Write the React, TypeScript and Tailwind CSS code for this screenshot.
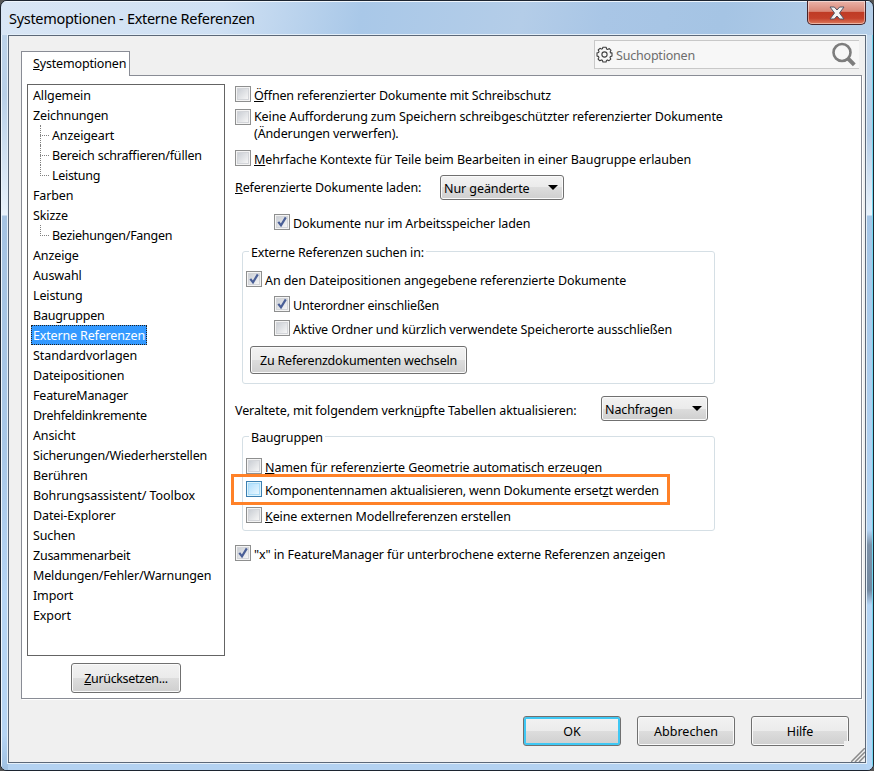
import { clsx } from "clsx";
import type { ReactNode } from "react";

type TreeItem = { label: string; child?: boolean; last?: boolean; tracking?: string };

const items: TreeItem[] = [
  { label: "Allgemein" },
  { label: "Zeichnungen" },
  { label: "Anzeigeart", child: true },
  { label: "Bereich schraffieren/füllen", child: true, tracking: "tracking-[-0.21px]" },
  { label: "Leistung", child: true, last: true, tracking: "tracking-[-0.3px]" },
  { label: "Farben" },
  { label: "Skizze" },
  { label: "Beziehungen/Fangen", child: true, last: true, tracking: "tracking-[-0.28px]" },
  { label: "Anzeige" },
  { label: "Auswahl" },
  { label: "Leistung" },
  { label: "Baugruppen", tracking: "tracking-[-0.2px]" },
  { label: "Externe Referenzen", tracking: "tracking-[-0.16px]" },
  { label: "Standardvorlagen", tracking: "tracking-[-0.06px]" },
  { label: "Dateipositionen" },
  { label: "FeatureManager", tracking: "tracking-[-0.2px]" },
  { label: "Drehfeldinkremente", tracking: "tracking-[-0.28px]" },
  { label: "Ansicht" },
  { label: "Sicherungen/Wiederherstellen", tracking: "tracking-[-0.18px]" },
  { label: "Berühren" },
  { label: "Bohrungsassistent/ Toolbox", tracking: "tracking-[-0.06px]" },
  { label: "Datei-Explorer" },
  { label: "Suchen" },
  { label: "Zusammenarbeit", tracking: "tracking-[-0.25px]" },
  { label: "Meldungen/Fehler/Warnungen", tracking: "tracking-[-0.16px]" },
  { label: "Import" },
  { label: "Export" },
];

function Key({ children }: { children: ReactNode }) {
  return <span className="underline underline-offset-1 [text-decoration-skip-ink:none]">{children}</span>;
}

function CheckBox({ checked, hot }: { checked?: boolean; hot?: boolean }) {
  return (
    <span
      className={clsx(
        "block size-4 shrink-0 border p-px",
        hot ? "border-[#3c7fb1] bg-[#def4fd]" : "border-[#8e8f8f] bg-[#f4f4f4]",
      )}
    >
      <span
        className={clsx(
          "relative block size-full border bg-linear-to-br",
          hot ? "border-[#a9dcf9] from-[#b1dffd] to-[#e9f7fe]" : "border-[#d3d5d9] from-[#cbcfd5] to-[#f6f6f6]",
        )}
      >
        {checked && (
          <svg className="absolute -left-px -top-px size-3" viewBox="0 0 12 12" fill="none">
            <path d="M2.3 5.8 L5 9.4 L9.8 1.4" stroke="#4a5f97" strokeWidth="2.2" />
          </svg>
        )}
      </span>
    </span>
  );
}

type OptionProps = { className?: string; text?: string; checked?: boolean; hot?: boolean; children: ReactNode };

function Option({ className, text = "mt-px", checked, hot, children }: OptionProps) {
  return (
    <label className={clsx("flex h-4 items-start gap-[3px]", className)}>
      <CheckBox checked={checked} hot={hot} />
      <span className={clsx("whitespace-nowrap", text)}>{children}</span>
    </label>
  );
}

function Button({ className, children }: { className?: string; children: ReactNode }) {
  return (
    <button
      className={clsx(
        "rounded-[3px] border border-[#707070] bg-[linear-gradient(#f2f2f2_0%,#ebebeb_50%,#dddddd_50%,#cfcfcf_100%)] whitespace-nowrap inset-shadow-[0_0_0_1px_#fafafa]",
        className,
      )}
    >
      {children}
    </button>
  );
}

function Select({ className, children }: { className?: string; children: ReactNode }) {
  return (
    <Button className={clsx("flex h-[25px] items-center justify-between pl-[3px] pr-[5px]", className)}>
      <span className="mt-0.5">{children}</span>
      <svg className="h-[5px] w-[10px]" viewBox="0 0 10 5">
        <path d="M0 0 H10 L5 5 Z" fill="#000" />
      </svg>
    </Button>
  );
}

function Group({ title, className, children }: { title: string; className?: string; children: ReactNode }) {
  return (
    <section className={clsx("relative rounded-[3px] border border-[#d5dfe5]", className)}>
      <h2 className="absolute -top-2 left-1.5 bg-white px-0.5 tracking-[-0.17px]">{title}</h2>
      {children}
    </section>
  );
}

function Tree() {
  return (
    <ul className="h-[572px] w-[198px] border border-[#646464] bg-white pl-[3px]">
      {items.map((item, i) => (
        <li key={i} className="flex h-5 items-start">
          {item.child && (
            <span className="relative ml-[9px] h-5 w-[10px] shrink-0">
              <i className={clsx("absolute left-0 top-0 border-l border-dotted border-[#808080]", item.last ? "h-[11px]" : "h-5")} />
              <i className="absolute left-0 top-[10px] w-[9px] border-t border-dotted border-[#808080]" />
            </span>
          )}
          <span
            className={clsx(
              "whitespace-nowrap",
              item.tracking,
              item.label === "Externe Referenzen"
                ? "h-5 border border-dotted border-[#222] bg-[#3399ff] px-px leading-[19px] text-white"
                : "px-0.5 leading-[21px]",
            )}
          >
            {item.label}
          </span>
        </li>
      ))}
    </ul>
  );
}

function TitleBar() {
  return (
    <header className="flex h-[34px] justify-between inset-shadow-[0_1px_0_#eef5fc]">
      <h1 className="ml-2 mt-[5px] text-[14.5px] leading-6 tracking-[-0.3px] whitespace-nowrap">Systemoptionen - Externe Referenzen</h1>
      <button className="mr-[7px] flex h-6 w-[59px] items-center justify-center rounded-b-[5px] border border-t-0 border-[#46242a] bg-[linear-gradient(#eab3a9_0%,#d98777_45%,#bf3b25_50%,#c4402a_75%,#dd7b5e_100%)] inset-shadow-[0_0_0_1px_#ffffff70]">
        <svg className="h-[14px] w-[16px]" viewBox="0 0 16 14">
          <path
            d="M1 1 H5.3 L8 4 L10.7 1 H15 L10.5 7 L15 13 H10.7 L8 10 L5.3 13 H1 L5.5 7 Z"
            fill="#f4f4f4"
            stroke="#535666"
            strokeWidth="1"
          />
        </svg>
      </button>
    </header>
  );
}

function SearchBox() {
  return (
    <div className="flex h-[29px] w-[265px] items-center border border-r-0 border-[#c8c8c8] bg-[#f7f7f7] text-[#6d6d6d]">
      <svg className="ml-px size-[17px]" viewBox="0 0 17 17" fill="none" stroke="#3f3f3f" strokeWidth="1.1" strokeLinejoin="round">
        <path d="M6.9 1.2 H10.1 L10.6 3 L11.7 3.5 L13.3 2.6 L15 4.3 L14.1 5.9 L14.5 6.9 H16 V10.1 L14.4 10.5 L14 11.5 L14.8 13.1 L13 14.7 L11.5 13.9 L10.5 14.4 L10.1 16 H6.9 L6.4 14.3 L5.4 13.9 L3.8 14.8 L2.1 13 L2.9 11.4 L2.5 10.4 L1 10.1 V6.9 L2.6 6.5 L3 5.5 L2.2 4 L4 2.3 L5.4 3.1 L6.5 2.7 Z" />
        <circle cx="8.5" cy="8.5" r="2.6" />
      </svg>
      <span className="ml-[3px] mt-0.5 flex-1 tracking-[-0.2px]">Suchoptionen</span>
      <svg className="mr-0.5 size-[26px]" viewBox="0 0 26 26" fill="none" stroke="#7d7d7d">
        <circle cx="11" cy="10.5" r="8.5" strokeWidth="2.6" />
        <path d="M17 16.5 L23.3 22.8" strokeWidth="4" />
      </svg>
    </div>
  );
}

function Options() {
  return (
    <div className="flex w-[500px] flex-col pt-0.5">
      <Option text="mt-px tracking-[-0.16px]"><Key>Ö</Key>ffnen referenzierter Dokumente mit Schreibschutz</Option>
      <Option className="mt-[7px]" text="-mt-px tracking-[-0.12px]">
        Keine Aufforderung zum Speichern schreibgeschützter referenzierter Dokumente
        <br />
        (Änderungen verwerfen).
      </Option>
      <Option className="mt-[25px]" text="mt-px tracking-[-0.08px]"><Key>M</Key>ehrfache Kontexte für Teile beim Bearbeiten in einer Baugruppe erlauben</Option>
      <div className="mt-[9px] flex h-[25px] items-center">
        <span className="w-[205px] whitespace-nowrap tracking-[-0.14px]"><Key>R</Key>eferenzierte Dokumente laden:</span>
        <Select className="w-[124px] tracking-[-0.08px]">Nur geänderte</Select>
      </div>
      <Option className="ml-[39px] mt-[14px]" checked>Dokumente nur im Arbeitsspeicher laden</Option>

      <Group title="Externe Referenzen suchen in:" className="ml-[7px] mt-[21px] h-[133px] w-[473px] pl-[3px] pt-[19px]">
        <Option text="mt-px tracking-[-0.09px]" checked>An den Dateipositionen angegebene referenzierte Dokumente</Option>
        <Option className="ml-7 mt-[9px]" text="mt-px tracking-[-0.19px]" checked>Unterordner einschließen</Option>
        <Option className="ml-7 mt-2" text="mt-px tracking-[-0.13px]">Aktive Ordner und kürzlich verwendete Speicherorte ausschließen</Option>
        <Button className="ml-1 mt-[10px] h-7 w-[217px] pt-px tracking-[-0.2px]">Zu Referenzdokumenten wechseln</Button>
      </Group>

      <div className="mt-3 flex h-[25px] items-center">
        <span className="w-[366px] whitespace-nowrap pt-1 tracking-[-0.1px]">Veraltete, mit folgendem verkn<Key>ü</Key>pfte Tabellen aktualisieren:</span>
        <Select className="w-[107px]">Nachfragen</Select>
      </div>

      <Group title="Baugruppen" className="ml-[7px] mt-[15px] h-[95px] w-[473px] pl-[3px] pt-[21px]">
        <Option text="mt-px tracking-[-0.11px]"><Key>N</Key>amen für referenzierte Geometrie automatisch erzeugen</Option>
        <div className="absolute -left-3 top-[37px] h-[31px] w-[439px] border-3 border-[#ff8127]" />
        <Option className="mt-[7px]" text="mt-px tracking-[-0.2px]" hot>Komponentennamen aktualisieren, wenn Dokumente erset<Key>z</Key>t werden</Option>
        <Option className="mt-[10px]" text="mt-px tracking-[-0.1px]"><Key>K</Key>eine externen Modellreferenzen erstellen</Option>
      </Group>

      <Option className="mt-[14px]" text="mt-px tracking-[-0.1px]" checked>"x" in FeatureManager für unterbrochene externe Referenzen an<Key>z</Key>eigen</Option>
    </div>
  );
}

export default function App() {
  return (
    <div className="h-[771px] w-[874px] bg-[#555]">
      <div className="h-full overflow-hidden rounded-[7px] border border-[#1c2430] bg-[linear-gradient(100deg,#d9e6f5_0%,#cfe0f3_22%,#a9c8e8_36%,#b4cde8_52%,#a9c6e6_60%,#a5c4e4_72%,#c2d7ec_100%)] font-['Noto_Sans',sans-serif] text-[12.5px] leading-[17px] tracking-[-0.12px] text-black">
        <TitleBar />
        <div className="flex h-[735px] bg-[#b4d2f1]">
          <div className="w-[7px] shrink-0 border-l border-[#eef5fc] bg-[linear-gradient(#bdd3ea_0px,#b9d0e8_60px,#e6f0fa_175px,#eaf3fc_180px,#a5c3e2_181px,#a9c8e8_420px,#b5d4f4_560px,#b5d4f4_700px,#9fc0e2_735px)]" />
          <main className="relative h-[728px] w-[858px] shrink-0 border border-[#5c6878] bg-[#f0f0f0] outline outline-[#e4eff9]">
            <div className="flex h-[39px] items-end justify-between pl-3 pr-[6px]">
              <div className="relative z-10 -mb-px flex h-[25px] w-[109px] items-center border border-b-0 border-[#898c95] bg-white pb-px pl-[11px]">
                <span className="tracking-[-0.16px]"><Key>S</Key>ystemoptionen</span>
              </div>
              <div className="self-start pt-1"><SearchBox /></div>
            </div>
            <div className="ml-3 flex h-[624px] w-[841px] gap-[10px] border border-[#898c95] bg-white pl-[5px] pt-2 shadow-[1px_1px_0_#fff]">
              <div className="flex flex-col">
                <Tree />
                <Button className="ml-11 mt-[7px] h-[30px] w-[110px] pt-px tracking-[-0.35px]"><Key>Z</Key>urücksetzen...</Button>
              </div>
              <Options />
            </div>
            <div className="ml-[514px] mt-[17px] flex gap-4">
              <Button className="h-[30px] w-[98px] border-[#3c7fb1] bg-[linear-gradient(#eaf6fb_0%,#dceff8_48%,#c6e2f0_50%,#b5d9ec_100%)] pt-px inset-shadow-[0_0_0_2px_#3fc8f4]">OK</Button>
              <Button className="h-[30px] w-[98px] pt-px tracking-normal">Abbrechen</Button>
              <Button className="h-[30px] w-[98px] pt-px">Hilfe</Button>
            </div>
            {/* resize grip, its box covers the corner of the help button */}
            <div className="absolute bottom-0 right-0 size-[21px]">
              <span className="absolute left-0 top-0 h-1.5 w-[5px] bg-[#f0f0f0]" />
              <svg className="absolute bottom-0 right-0 size-[14px]" viewBox="0 0 14 14" stroke="#8a8a8a" strokeWidth="1.5">
                <path d="M0 14 L14 0 M4 14 L14 4 M8 14 L14 8" />
              </svg>
            </div>
          </main>
          <div className="w-[7px] shrink-0 border-r border-[#6fd7f0] bg-[linear-gradient(#c2d7ec_0px,#b5cce6_100px,#e6f0fa_175px,#eaf3fc_180px,#a5c5e6_181px,#b5d4f4_495px,#7d91a8_510px,#7388a0_555px,#b5d4f4_570px,#b5d4f4_735px)]" />
        </div>
      </div>
    </div>
  );
}
